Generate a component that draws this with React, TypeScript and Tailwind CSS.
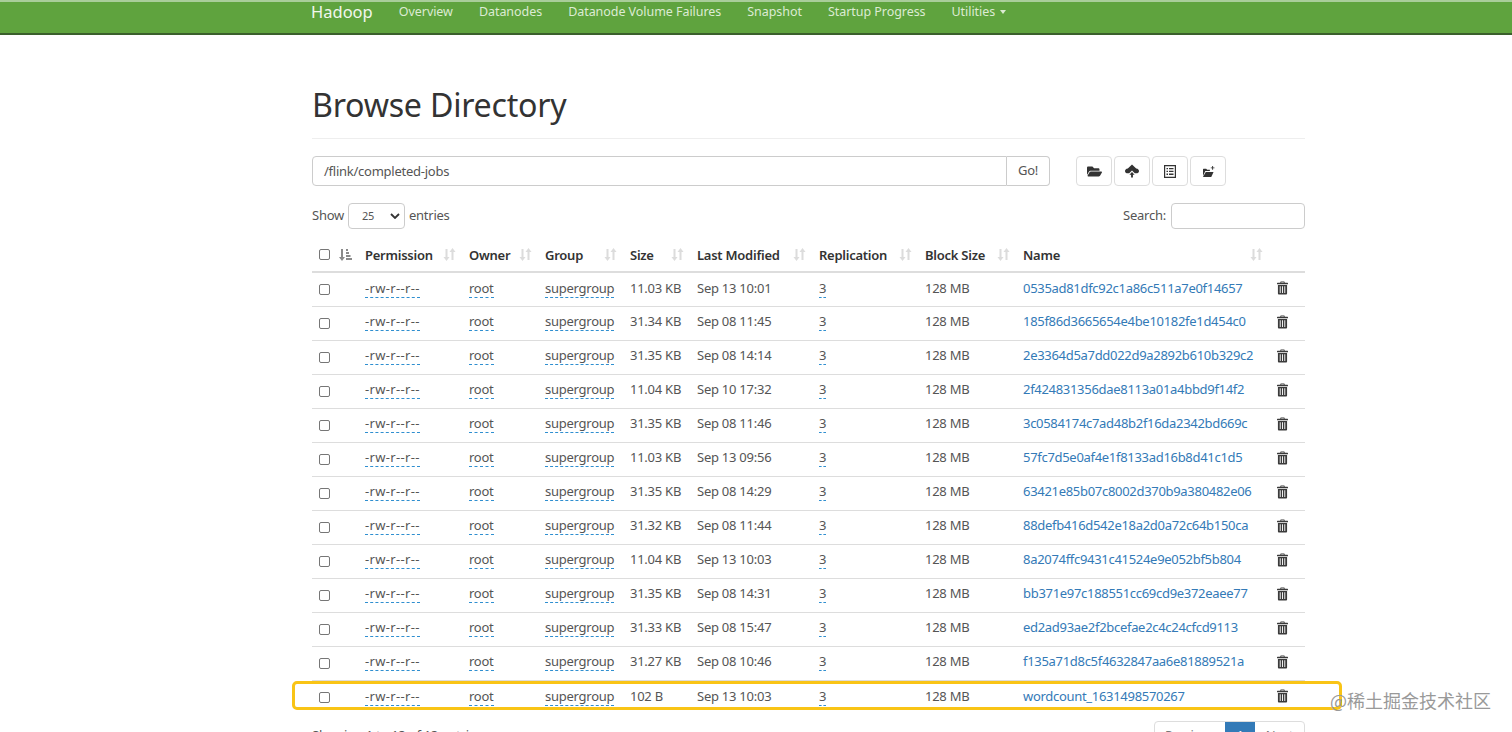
import React from "react";
import { FaFolderOpen } from "react-icons/fa";

const rows = [
  ["11.03 KB", "Sep 13 10:01", "0535ad81dfc92c1a86c511a7e0f14657"],
  ["31.34 KB", "Sep 08 11:45", "185f86d3665654e4be10182fe1d454c0"],
  ["31.35 KB", "Sep 08 14:14", "2e3364d5a7dd022d9a2892b610b329c2"],
  ["11.04 KB", "Sep 10 17:32", "2f424831356dae8113a01a4bbd9f14f2"],
  ["31.35 KB", "Sep 08 11:46", "3c0584174c7ad48b2f16da2342bd669c"],
  ["11.03 KB", "Sep 13 09:56", "57fc7d5e0af4e1f8133ad16b8d41c1d5"],
  ["31.35 KB", "Sep 08 14:29", "63421e85b07c8002d370b9a380482e06"],
  ["31.32 KB", "Sep 08 11:44", "88defb416d542e18a2d0a72c64b150ca"],
  ["11.04 KB", "Sep 13 10:03", "8a2074ffc9431c41524e9e052bf5b804"],
  ["31.35 KB", "Sep 08 14:31", "bb371e97c188551cc69cd9e372eaee77"],
  ["31.33 KB", "Sep 08 15:47", "ed2ad93ae2f2bcefae2c4c24cfcd9113"],
  ["31.27 KB", "Sep 08 10:46", "f135a71d8c5f4632847aa6e81889521a"],
  ["102 B", "Sep 13 10:03", "wordcount_1631498570267"],
];

const Sort = ({ active = false }: { active?: boolean }) =>
  active ? (
    <svg width="13" height="13" viewBox="0 0 13 13" className="text-[#8a8a8a]" fill="currentColor">
      <path d="M2 1h2v8h2l-3 4-3-4h2z" />
      <path d="M7 1h2v2H7zM7 4h3v2H7zM7 7h4.500v2H7zM7 10h6v2H7z" />
    </svg>
  ) : (
    <svg width="13" height="13" viewBox="0 0 13 13" className="text-[#dcdcdc]" fill="currentColor">
      <path d="M2.500 1h2v8h2l-3 4-3-4h2z" />
      <path d="M8.500 12h2V4h2l-3-4-3 4h2z" />
    </svg>
  );

const Trash = () => (
  <svg width="11" height="14" viewBox="0 0 12 14" className="text-[#3b3b3b]" fill="currentColor">
    <path d="M4 0h4l.5 1.200H11.500a.5.5 0 0 1 .5.5V3H0V1.700a.5.5 0 0 1 .5-.5H3.500zM4.700.8l-.2.4h3l-.2-.4z" fillRule="evenodd" />
    <path d="M1 3.800h10V13a1 1 0 0 1-1 1H2a1 1 0 0 1-1-1zM3 5v7.500h1V5zm2.500 0v7.500h1V5zM8 5v7.500h1V5z" fillRule="evenodd" />
  </svg>
);

const CloudUp = () => (
  <svg width="14" height="14" viewBox="0 0 15 14" fill="currentColor">
    <path d="M7.500 0 12 4.200c2 .3 3 1.500 3 2.800 0 1.500-1.200 2.500-3 2.500h-1.500L7.500 6.500l-3 3H3C1.200 9.500 0 8.500 0 7c0-1.300 1-2.500 3-2.800z" />
    <path d="M7.500 8 10.300 11H8.500v3h-2v-3H4.700z" />
  </svg>
);

const ListDoc = () => (
  <svg width="12" height="13" viewBox="0 0 12 13" fill="currentColor">
    <path d="M0 0h12v13H0zM1.200 1.200v10.600h9.600V1.200z" fillRule="evenodd" />
    <path d="M2.500 3h1.500v1.300H2.500zM5 3h4.500v1.300H5zM2.500 5.800h1.500v1.300H2.500zM5 5.800h4.500v1.300H5zM2.500 8.600h1.500v1.300H2.500zM5 8.600h4.500v1.300H5z" />
  </svg>
);

const FolderPlus = () => (
  <svg width="13" height="11" viewBox="0 0 14 12" fill="currentColor">
    <path d="M1.500 3h3l1 1h3v1.500H3.500L1 11V3.500z" />
    <path d="M4 6.500h8.500L10 12H.9z" />
    <path d="M11 0h1v1.500h1.500v1H12V4h-1V2.500H9.500v-1H11z" />
  </svg>
);

const Dashed = ({ children, wide = false }: { children: React.ReactNode; wide?: boolean }) => (
  <span className={wide ? "border-b border-dashed border-[#2f8fd0] tracking-[0.33px]" : "border-b border-dashed border-[#2f8fd0]"}>
    {children}
  </span>
);

const headers: [string, string][] = [
  ["Permission", "w-[104px]"],
  ["Owner", "w-[76px]"],
  ["Group", "w-[85px]"],
  ["Size", "w-[67px]"],
  ["Last Modified", "w-[122px]"],
  ["Replication", "w-[106px]"],
  ["Block Size", "w-[98px]"],
  ["Name", "w-[253px]"],
];

const IconBtn = ({ children }: { children: React.ReactNode }) => (
  <div className="w-[36px] h-[30px] flex items-center justify-center border border-[#ddd] rounded bg-white text-[#333]">
    {children}
  </div>
);

export default function App() {
  return (
    <div
      className="relative h-[732px] overflow-hidden bg-white text-[13px] text-[#555]"
      style={{ fontFamily: '"Noto Sans", "Open Sans", sans-serif' }}
    >
      <nav className="h-[35px] bg-[#5fa33e] border-t-2 border-t-[#a9cd9a] border-b-2 border-b-[#3a5f2c] pl-[311px] flex items-start text-[#dcebd3]">
        <span className="text-[16.500px] leading-[20px] text-[#f1f7ed] mr-[26px]">Hadoop</span>
        <div className="flex gap-[26px] text-[12.500px] leading-[20px] tracking-[-0.05px]">
          <span>Overview</span>
          <span>Datanodes</span>
          <span>Datanode Volume Failures</span>
          <span>Snapshot</span>
          <span>Startup Progress</span>
          <span className="flex items-center gap-[5px]">
            Utilities
            <span className="w-0 h-0 border-x-[3.500px] border-x-transparent border-t-[4px] border-t-[#dcebd3]" />
          </span>
        </div>
      </nav>

      <main className="ml-[312px] w-[993px] tracking-[-0.25px]">
        <h1 className="text-[32.200px] leading-[40px] text-[#333] mt-[50px] pb-[13px] border-b border-[#eee]">
          Browse Directory
        </h1>

        <div className="flex mt-[17px] items-center">
          <div className="flex w-[738px] h-[30px] text-[13px] text-[#555]">
            <div className="flex-1 flex items-center px-[11px] pt-px border border-[#ccc] rounded-l">/flink/completed-jobs</div>
            <div className="w-[43px] flex items-center justify-center border border-l-0 border-[#ccc] rounded-r">Go!</div>
          </div>
          <div className="flex gap-[2px] ml-[26px]">
            <IconBtn><FaFolderOpen size={15} /></IconBtn>
            <IconBtn><CloudUp /></IconBtn>
            <IconBtn><ListDoc /></IconBtn>
            <IconBtn><FolderPlus /></IconBtn>
          </div>
        </div>

        <div className="flex items-center justify-between mt-[17px] h-[26px]">
          <div className="flex items-center gap-[4px]">
            Show
            <div className="w-[57px] h-[26px] flex items-center justify-between pl-[13px] pr-[4px] border border-[#ccc] rounded text-[11px]">
              25
              <svg width="10" height="6" viewBox="0 0 10 6" fill="none" stroke="#333" strokeWidth="1.800"><path d="m1 1 4 4 4-4" /></svg>
            </div>
            entries
          </div>
          <div className="flex items-center gap-[5px]">
            Search:
            <div className="w-[134px] h-[26px] border border-[#ccc] rounded" />
          </div>
        </div>

        <table className="table-fixed w-full mt-[9px] border-collapse">
          <thead>
            <tr className="h-[34px] border-b-2 border-[#ddd] text-[#333]">
              <th className="w-[53px] p-0 font-normal">
                <div className="flex items-center pl-[7px] gap-[9px]">
                  <span className="w-[11px] h-[11px] border border-[#767676] rounded-[2px]" />
                  <Sort active />
                </div>
              </th>
              {headers.map(([h, w]) => (
                <th key={h} className={`${w} p-0 font-semibold text-left`}>
                  <div className="flex items-center justify-between pr-[13px]">
                    <span className="pt-[2px]">{h}</span>
                    <Sort />
                  </div>
                </th>
              ))}
              <th className="p-0" />
            </tr>
          </thead>
          <tbody>
            {rows.map(([size, date, name]) => (
              <tr key={name} className="h-[34px] border-b border-[#ddd] last:border-b-0">
                <td className="p-0">
                  <div className="ml-[7px] w-[11px] h-[11px] border border-[#767676] rounded-[2px]" />
                </td>
                <td className="p-0 pb-[2px]"><Dashed wide>-rw-r--r--</Dashed></td>
                <td className="p-0 pb-[2px]"><Dashed>root</Dashed></td>
                <td className="p-0 pb-[2px]"><Dashed>supergroup</Dashed></td>
                <td className="p-0 pb-[2px]">{size}</td>
                <td className="p-0 pb-[2px]">{date}</td>
                <td className="p-0 pb-[2px]"><Dashed>3</Dashed></td>
                <td className="p-0 pb-[2px]">128 MB</td>
                <td className="p-0 pb-[2px] text-[#337ab7] tracking-[-0.3px]">{name}</td>
                <td className="p-0 pb-[3px]"><div className="ml-[1px]"><Trash /></div></td>
              </tr>
            ))}
          </tbody>
        </table>

        <div className="flex items-start justify-between mt-[7px]">
          <span className="mt-[5px]">Showing 1 to 13 of 13 entries</span>
          <div className="flex h-[30px] border border-[#ddd] rounded text-[#777]">
            <span className="w-[70px] flex items-center justify-center">Previous</span>
            <span className="w-[30px] flex items-center justify-center bg-[#337ab7] text-white">1</span>
            <span className="w-[49px] flex items-center justify-center">Next</span>
          </div>
        </div>
      </main>

      <div className="absolute left-[292px] top-[681px] w-[1050px] h-[29px] border-[3px] border-[#f9c416] rounded-[5px] pointer-events-none" />
      <div
        className="absolute left-[1330px] top-[688px] text-[18px] leading-[24px] text-[#999]"
        style={{ fontFamily: '"Noto Sans CJK SC", sans-serif' }}
      >
        @稀土掘金技术社区
      </div>
    </div>
  );
}
